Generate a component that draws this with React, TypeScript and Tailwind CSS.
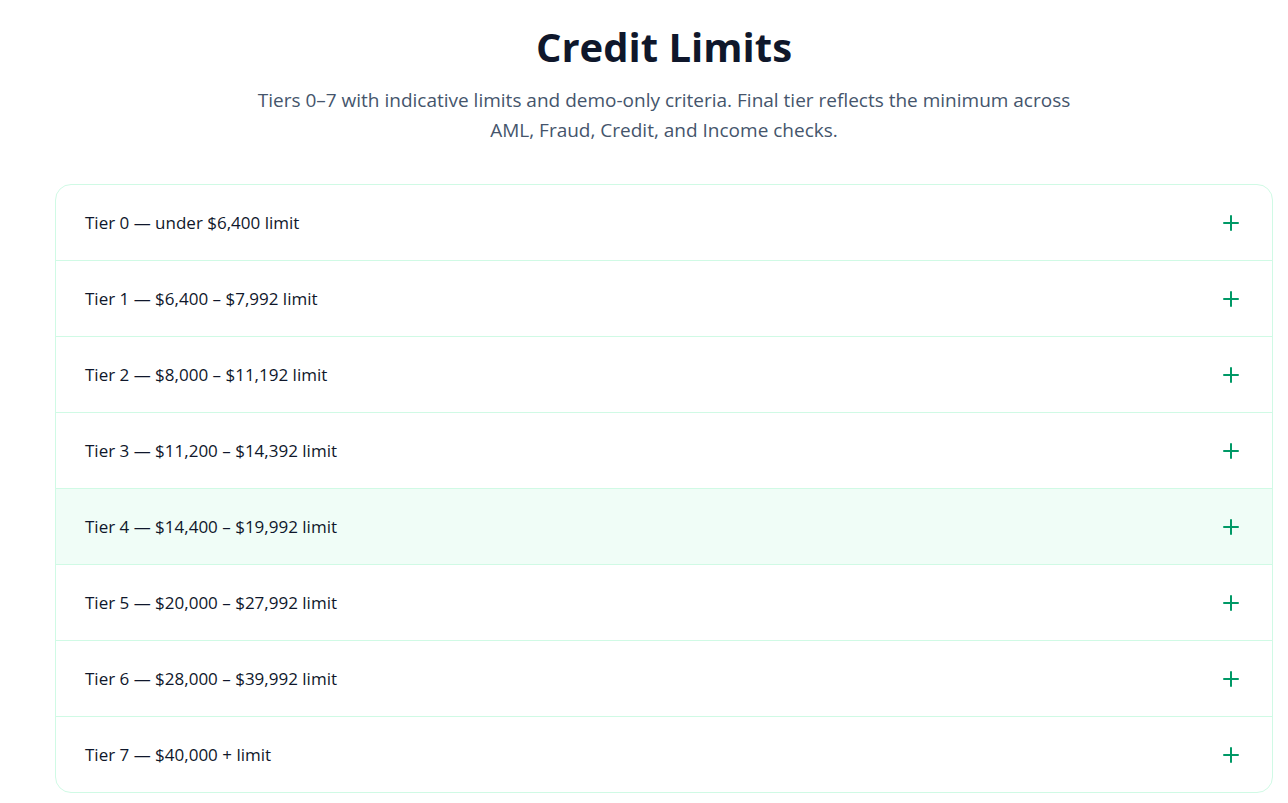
import { Plus } from "lucide-react"

const tiers = [
  "Tier 0 — under $6,400 limit",
  "Tier 1 — $6,400 – $7,992 limit",
  "Tier 2 — $8,000 – $11,192 limit",
  "Tier 3 — $11,200 – $14,392 limit",
  "Tier 4 — $14,400 – $19,992 limit",
  "Tier 5 — $20,000 – $27,992 limit",
  "Tier 6 — $28,000 – $39,992 limit",
  "Tier 7 — $40,000 + limit",
]

export default function App() {
  return (
    <div className="min-h-screen bg-white font-['Open_Sans',sans-serif] pl-[55px] pr-[15px] pt-[20px] pb-10">
      <div className="text-center">
        <h1 className="text-[40px] leading-[54px] font-bold text-slate-900">Credit Limits</h1>
        <p className="mx-auto mt-[11px] max-w-[830px] text-[19px] leading-[30px] text-slate-600">
          Tiers 0–7 with indicative limits and demo-only criteria. Final tier reflects the minimum across
          AML, Fraud, Credit, and Income checks.
        </p>
      </div>

      <div className="mt-[39px] overflow-hidden rounded-2xl border border-emerald-100 bg-white">
        {tiers.map((t, i) => (
          <button
            key={t}
            className={`flex w-full items-center justify-between px-[29px] text-left ${
              i > 0 ? "h-[76px] border-t border-emerald-100 pt-px" : "h-[75px]"
            } ${i === 4 ? "bg-[#f0fdf7]" : ""}`}
          >
            <span className="text-[17px] font-medium text-slate-900">{t}</span>
            <Plus className="h-6 w-6 text-emerald-600" strokeWidth={2} />
          </button>
        ))}
      </div>
    </div>
  )
}
